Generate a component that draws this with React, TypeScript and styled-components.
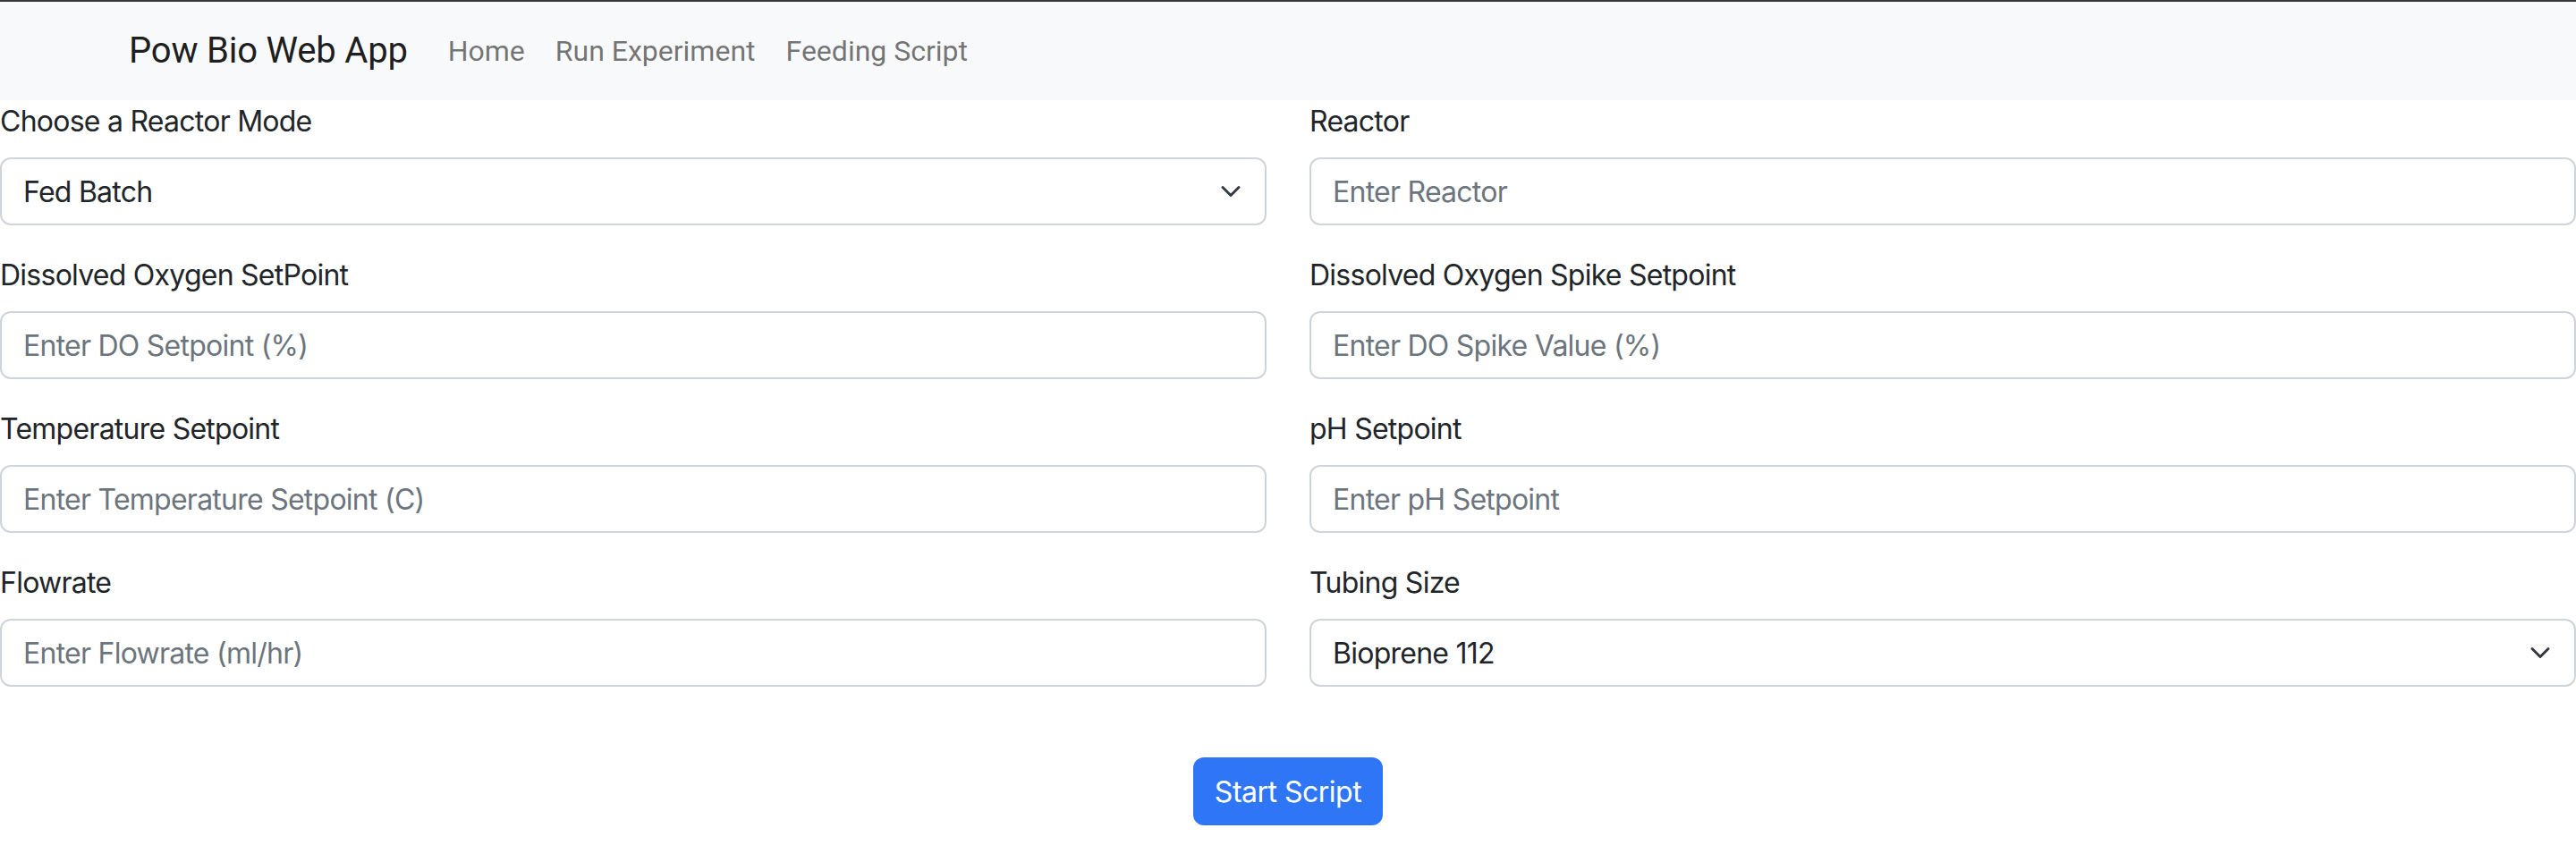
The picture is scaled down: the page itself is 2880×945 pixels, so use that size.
import React from "react";
import styled, { createGlobalStyle } from "styled-components";

const GlobalStyle = createGlobalStyle`
  html, body { margin: 0; padding: 0; background: #ffffff; }
  body {
    font-family: Inter, "Noto Sans", "Liberation Sans", sans-serif;
    color: #212529;
  }
  * { box-sizing: border-box; }
`;

const Navbar = styled.nav`
  border-top: 2px solid #3a3a3a;
  background: #f8f9fa;
  height: 112px;
  display: flex;
  align-items: center;
  padding-left: 144px;
  font-family: Roboto, "Liberation Sans", sans-serif;
`;

const Brand = styled.a`
  font-size: 40px;
  line-height: 60px;
  letter-spacing: -0.2px;
  color: rgba(0, 0, 0, 0.9);
  margin-right: 28px;
  text-decoration: none;
`;

const NavList = styled.div`
  display: flex;
  align-items: center;
`;

const NavLink = styled.a`
  font-size: 32px;
  line-height: 48px;
  padding: 0 17px;
  color: rgba(0, 0, 0, 0.55);
  text-decoration: none;
`;

const Form = styled.form`
  display: grid;
  grid-template-columns: 1fr 1fr;
  column-gap: 48px;
`;

const Group = styled.div`
  display: flex;
  flex-direction: column;
  margin-bottom: 32px;
`;

const Label = styled.label`
  font-size: 32px;
  line-height: 48px;
  letter-spacing: -0.75px;
  margin-bottom: 16px;
  color: #212529;
`;

const Control = styled.div<{ $placeholder?: boolean }>`
  position: relative;
  height: 76px;
  border: 2px solid #ced4da;
  border-radius: 12px;
  padding: 0 24px;
  display: flex;
  align-items: center;
  font-size: 32px;
  letter-spacing: -0.75px;
  color: ${(p) => (p.$placeholder ? "#6c757d" : "#212529")};
  background: #ffffff;
`;

const Chevron = styled.svg`
  position: absolute;
  right: 26px;
  top: 50%;
  width: 24px;
  height: 24px;
  margin-top: -12px;
`;

const ButtonRow = styled.div`
  display: flex;
  justify-content: center;
  padding-top: 47px;
`;

const Button = styled.button`
  height: 76px;
  padding: 0 24px;
  border: none;
  border-radius: 12px;
  background: #2f76f6;
  color: #ffffff;
  font-family: Inter, "Noto Sans", sans-serif;
  font-size: 32px;
  letter-spacing: -0.5px;
  cursor: pointer;
`;

const fields: { label: string; text: string; select?: boolean }[] = [
  { label: "Choose a Reactor Mode", text: "Fed Batch", select: true },
  { label: "Reactor", text: "Enter Reactor" },
  { label: "Dissolved Oxygen SetPoint", text: "Enter DO Setpoint (%)" },
  { label: "Dissolved Oxygen Spike Setpoint", text: "Enter DO Spike Value (%)" },
  { label: "Temperature Setpoint", text: "Enter Temperature Setpoint (C)" },
  { label: "pH Setpoint", text: "Enter pH Setpoint" },
  { label: "Flowrate", text: "Enter Flowrate (ml/hr)" },
  { label: "Tubing Size", text: "Bioprene 112", select: true },
];

export default function App() {
  return (
    <>
      <GlobalStyle />
      <Navbar>
        <Brand>Pow Bio Web App</Brand>
        <NavList>
          <NavLink>Home</NavLink>
          <NavLink>Run Experiment</NavLink>
          <NavLink>Feeding Script</NavLink>
        </NavList>
      </Navbar>
      <Form onSubmit={(e) => e.preventDefault()}>
        {fields.map((f) => (
          <Group key={f.label}>
            <Label>{f.label}</Label>
            <Control $placeholder={!f.select}>
              {f.text}
              {f.select && (
                <Chevron viewBox="0 0 16 16">
                  <path
                    d="M2 5l6 6 6-6"
                    fill="none"
                    stroke="#343a40"
                    strokeWidth="2"
                    strokeLinecap="round"
                    strokeLinejoin="round"
                  />
                </Chevron>
              )}
            </Control>
          </Group>
        ))}
      </Form>
      <ButtonRow>
        <Button type="button">Start Script</Button>
      </ButtonRow>
    </>
  );
}
